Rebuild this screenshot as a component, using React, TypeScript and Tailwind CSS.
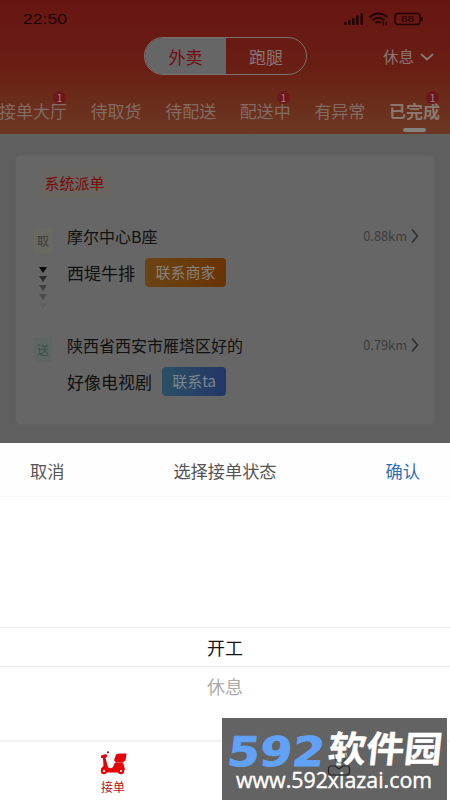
import React from "react";

const tabs = [
  { label: "接单大厅", badge: true },
  { label: "待取货" },
  { label: "待配送" },
  { label: "配送中", badge: true },
  { label: "有异常" },
  { label: "已完成", badge: true, active: true },
];

function StatusBar() {
  return (
    <div className="flex h-[37px] items-center justify-between pr-[25px] pl-[23px] text-[#210504]">
      <span className="w-[44px] text-[15px] leading-none">
        <svg width="46" height="14" viewBox="0 0 46 14" className="block">
          <text x="0" y="12" fontSize="14.5" textLength="44" lengthAdjust="spacingAndGlyphs" fill="currentColor" className="font-['Liberation_Sans',sans-serif]">22:50</text>
        </svg>
      </span>
      <svg width="82" height="16" viewBox="0 0 82 16" fill="currentColor">
        <rect x="1" y="11" width="2.6" height="3" rx="1" />
        <rect x="5" y="9" width="2.6" height="5" rx="1" />
        <rect x="9" y="7" width="2.6" height="7" rx="1" />
        <rect x="13" y="4.5" width="2.6" height="9.5" rx="1" />
        <rect x="17.5" y="2" width="2.4" height="12" rx="1" />
        <g fill="none" stroke="currentColor" strokeWidth="2">
          <path d="M26.5 6.2Q35.5-1.2 44.5 6.2" />
          <path d="M29.5 9.2Q35.5 4.2 41.5 9.2" />
          <path d="M32.5 12Q35.5 9.5 38 12" />
          <path d="M40.3 10.5v4M43.2 10.5v4" strokeWidth="1.4" />
        </g>
        <rect x="52" y="2.5" width="25" height="11" rx="3" fill="none" stroke="currentColor" strokeWidth="1.5" />
        <path d="M78.5 6q2 2 0 4z" stroke="currentColor" />
        <text x="58" y="11.4" fontSize="9.5" textLength="13" lengthAdjust="spacingAndGlyphs" className="font-['Liberation_Sans',sans-serif]">88</text>
      </svg>
    </div>
  );
}

function Stop({ kind, name, km, place, action }: { kind: "pick" | "drop"; name: string; km: string; place: string; action: string }) {
  const pick = kind === "pick";
  return (
    <div className="flex h-[109px]">
      <div className="flex w-[51px] flex-col items-start pl-[18px]">
        <span className={"mt-[8px] flex h-[25px] w-[18px] items-center justify-center text-[12px] " + (pick ? "bg-[#686961] text-[#3d3c38]" : "bg-[#5e6563] text-[#3a4f49]")}>
          {pick ? "取" : "送"}
        </span>
        {pick && (
          <svg width="18" height="50" viewBox="0 0 18 50" className="mt-[12px]">
            <path d="M5 2h8l-4 6z" fill="#080808" />
            <path d="M5 11h8l-4 6z" fill="#2b2b2b" />
            <path d="M5 20h8l-4 6z" fill="#3f3f3f" />
            <path d="M5 29h8l-4 6z" fill="#4b4b4b" />
            <path d="M5 38h8l-4 6z" fill="#606060" />
          </svg>
        )}
      </div>
      <div className="flex-1">
        <div className="flex h-[32px] items-center justify-between pr-[15px]">
          <span className="text-[16px] text-[#111111]">{name}</span>
          <span className="flex items-center gap-[4px] text-[12.8px] text-[#3d3d3d]">
            {km}
            <svg width="8" height="16" viewBox="0 0 8 16" fill="none" stroke="#303030" strokeWidth="1.6"><path d="M1 1.5l5.5 6.5L1 14.5" /></svg>
          </span>
        </div>
        <div className="mt-[6px] flex items-center gap-[10px]">
          <span className="text-[17px] text-[#101010]">{place}</span>
          <span className={"flex h-[29px] items-center justify-center rounded-[4px] text-[15px] " + (pick ? "w-[81px] bg-linear-to-r from-[#6b4414] to-[#683307] text-[#88827b]" : "w-[64px] bg-linear-to-r from-[#2b5064] to-[#233567] text-[#7c878e]")}>
            {action}
          </span>
        </div>
      </div>
    </div>
  );
}

function Watermark() {
  return (
    <div className="absolute top-[718px] left-[222px] h-[82px] w-[225px] bg-[#636363]">
      <svg width="225" height="82" viewBox="0 0 225 82" className="block">
        <g transform="translate(4 47.5) skewX(-7)">
          <text x="0" y="0" fontSize="41" fontWeight="700" textLength="97" lengthAdjust="spacingAndGlyphs" fill="#62a2f6" stroke="#62a2f6" strokeWidth="0.8" className="font-['DejaVu_Sans',sans-serif]">592</text>
        </g>
        <g transform="translate(105 44) skewX(-6)">
          <text x="0" y="0" fontSize="36" fontWeight="700" textLength="114" lengthAdjust="spacingAndGlyphs" fill="#ffffff" stroke="#ffffff" strokeWidth="0.4" className="font-['Noto_Sans_CJK_SC',sans-serif]">软件园</text>
        </g>
        <text x="14" y="70" fontSize="21" fontWeight="500" textLength="196" lengthAdjust="spacingAndGlyphs" fill="#ffffff" stroke="#ffffff" strokeWidth="0.4" className="font-['Open_Sans',sans-serif]">www.592xiazai.com</text>
        <g fill="none" stroke="#252525" strokeWidth="1.2">
          <path d="M113 35c-1 5 1 10 5 10s7-5 5-10" opacity=".55" />
          <path d="M108 48h5l4 3 4-3h5l1.5 2v5l-2 2h-17l-2-2v-5z" />
        </g>
      </svg>
    </div>
  );
}

export default function App() {
  return (
    <div className="relative flex h-[800px] w-[450px] flex-col overflow-hidden bg-white font-['Noto_Sans_CJK_SC',sans-serif]">
      <header className="h-[134px] shrink-0 bg-linear-to-b from-[#681512] via-[#691e13] to-[#6b3822]">
        <StatusBar />
        <div className="flex h-[38px] items-center pr-[16px] pl-[144px]">
          <div className="flex h-[38px] w-[163px] overflow-hidden rounded-full border border-[#777170] text-[17px]">
            <span className="flex w-[81px] items-center justify-center bg-[#666666] pt-px text-[#720b12]">外卖</span>
            <span className="flex flex-1 items-center justify-center pt-px text-[#8a7672]">跑腿</span>
          </div>
          <div className="ml-auto flex items-center gap-[6px] pt-px text-[15.5px] text-[#8a7672]">
            休息
            <svg width="14" height="8" viewBox="0 0 14 8" fill="none" stroke="currentColor" strokeWidth="1.8"><path d="M1 1l6 5.5L13 1" /></svg>
          </div>
        </div>
        <nav className="-ml-px flex gap-[23.6px] pt-[23px]">
          {tabs.map((t) => (
            <div key={t.label} className={"relative h-[35px] shrink-0 text-[17px] leading-[25px] " + (t.active ? "font-bold text-[#8c7770]" : "text-[#826b64]")}>
              {t.label}
              {t.badge && <span className="absolute -top-[7px] right-[1px] flex h-[13px] w-[13px] items-center justify-center rounded-full bg-[#6d161b] text-[11px] leading-none font-normal text-[#a17d7c]">1</span>}
              {t.active && <span className="mx-auto mt-[5px] block h-[4px] w-[23px] rounded-full bg-[#858180]" />}
            </div>
          ))}
        </nav>
      </header>

      <main className="h-[309px] shrink-0 bg-[#5f5f5f] px-[16px] pt-[22px]">
        <section className="h-[268px] rounded-[4px] bg-[#666666] shadow-[0_0_4px_#646464]">
          <div className="pt-[12px] pl-[24px]">
            <span className="flex h-[30px] w-[69px] items-center justify-center bg-[#696560] text-[15px] text-[#770b0c]">系统派单</span>
          </div>
          <div className="pt-[22px]">
            <Stop kind="pick" name="摩尔中心B座" km="0.88km" place="西堤牛排" action="联系商家" />
            <Stop kind="drop" name="陕西省西安市雁塔区好的" km="0.79km" place="好像电视剧" action="联系ta" />
          </div>
        </section>
      </main>

      <div className="flex h-[54px] shrink-0 items-center justify-between border-b border-[#f7f7f7] bg-[#fefefe] px-[30px] pt-[3px] text-[17.2px] text-[#555555]">
        <span>取消</span>
        <span>选择接单状态</span>
        <span className="text-[#2d6fb9]">确认</span>
      </div>
      <div className="flex h-[243px] shrink-0 flex-col pt-[130px] text-center text-[18px]">
        <div className="flex h-[40px] items-center justify-center border-y border-[#ececec] pt-px text-[#171717]">开工</div>
        <div className="flex h-[38px] items-center justify-center text-[#ababab]">休息</div>
      </div>
      <footer className="h-[60px] shrink-0 border-t-2 border-[#f1f1f1]">
        <div className="flex w-[226px] flex-col items-center pt-[8px] text-[12px] leading-[16px] text-[#bd1018]">
          <svg width="28" height="26" viewBox="0 0 28 26" className="mb-[3px]" fill="#e60007">
            <path d="M2 5.5l5-1.5 1.5 2L6.5 8l2.5 9c1 1.5 4 1.5 5 0l2-4.5h8l2 7-3 3H5l-3-4 2.5-2.5L4 8H2z" />
            <path d="M17 4.5l3-1h7.5l-1 7-3 2h-6l-2.5-2z" />
            <circle cx="5" cy="21" r="3.2" />
            <circle cx="22" cy="21" r="3.2" />
            <circle cx="5" cy="21" r="1.1" fill="#fff" />
            <circle cx="22" cy="21" r="1.1" fill="#fff" />
            <circle cx="9" cy="2.3" r="1.1" fill="#5b2525" />
          </svg>
          接单
        </div>
      </footer>
      <Watermark />
    </div>
  );
}
